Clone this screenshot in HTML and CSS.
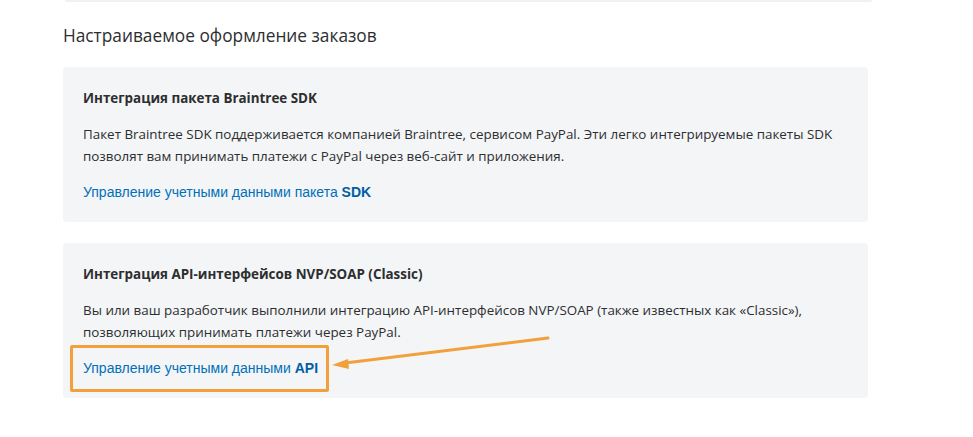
FILE: index.html
```html
<!DOCTYPE html>
<html lang="ru">
<head>
<meta charset="utf-8">
<link rel="stylesheet" href="styles.css">
</head>
<body>
<div class="page">
  <div class="prev-card"></div>
  <h2 class="section-title">Настраиваемое оформление заказов</h2>
  <div class="card">
    <h3 class="card-title">Интеграция пакета Braintree SDK</h3>
    <p class="card-text">Пакет Braintree SDK поддерживается компанией Braintree, сервисом PayPal. Эти легко интегрируемые пакеты SDK позволят вам принимать платежи с PayPal через веб-сайт и приложения.</p>
    <div class="card-link-row"><a class="card-link" href="#">Управление учетными данными пакета <b>SDK</b></a></div>
  </div>
  <div class="card card-annotated">
    <h3 class="card-title">Интеграция API-интерфейсов NVP/SOAP (Classic)</h3>
    <p class="card-text">Вы или ваш разработчик выполнили интеграцию API-интерфейсов NVP/SOAP (также известных как «Classic»), позволяющих принимать платежи через PayPal.</p>
    <div class="card-link-row highlighted"><a class="card-link" href="#">Управление учетными данными <b>API</b></a></div>
    <svg class="arrow" width="230" height="45" viewBox="0 0 230 45">
      <line x1="219" y1="6" x2="16" y2="31" stroke="#f2a03d" stroke-width="3" stroke-linecap="round"/>
      <polygon points="3,33 19,27 20,37" fill="#f2a03d"/>
    </svg>
  </div>
</div>
</body>
</html>
```
FILE: styles.css
```css
html, body {
  margin: 0;
  padding: 0;
  background: #ffffff;
}
body {
  font-family: "Open Sans", "Noto Sans", "DejaVu Sans", sans-serif;
  color: #2c2e2f;
}
.page {
  width: 805px;
  margin-left: 63px;
}
.prev-card {
  height: 2px;
  margin-left: 2px;
  margin-right: -4px;
  background: #f0f1f3;
  border-radius: 0 0 3px 3px;
}
.section-title {
  margin: 22px 0 0 0;
  font-size: 17.3px;
  line-height: 24px;
  font-weight: 400;
  color: #2c2e2f;
}
.card {
  margin-top: 19px;
  background: #f4f5f7;
  border-radius: 4px;
  padding: 20px 20px 19px 20px;
}
.card + .card {
  margin-top: 21px;
}
.card-annotated {
  position: relative;
}
.card-title {
  margin: 0;
  font-size: 13.4px;
  line-height: 22px;
  font-weight: 700;
}
.card-text {
  margin: 14px 0 0 0;
  font-size: 13.4px;
  line-height: 22px;
}
.card-link-row {
  margin-top: 14px;
  font-family: "Liberation Sans", Arial, sans-serif;
  font-size: 14px;
  line-height: 22px;
}
.card-link {
  color: #0070ba;
  text-decoration: none;
}
.card-link b {
  color: #005ea6;
  font-weight: 700;
}
.highlighted {
  position: relative;
}
.highlighted::after {
  content: "";
  position: absolute;
  left: -13px;
  top: -12px;
  width: 253px;
  height: 41px;
  border: 3px solid #f2a03d;
  border-radius: 2px;
  pointer-events: none;
}
.arrow {
  position: absolute;
  left: 266px;
  top: 89px;
}
```
